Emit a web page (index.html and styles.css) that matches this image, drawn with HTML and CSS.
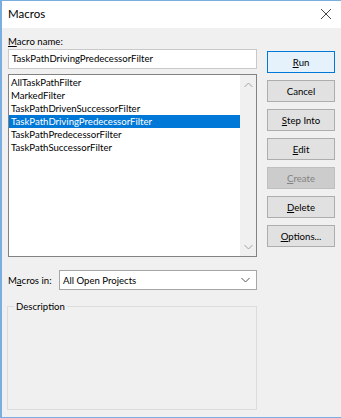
FILE: index.html
```html
<!DOCTYPE html>
<html>
<head>
<meta charset="utf-8">
<link rel="stylesheet" href="styles.css">
</head>
<body>
<div class="window">
  <div class="titlebar">
    <span class="title">Macros</span>
    <svg class="close" width="12" height="12" viewBox="0 0 12 12"><path d="M1 1 L11 11 M11 1 L1 11" stroke="#444" stroke-width="1" fill="none"/></svg>
  </div>
  <div class="content">
    <div class="left">
      <div class="label"><u>M</u>acro name:</div>
      <div class="input">TaskPathDrivingPredecessorFilter</div>
      <div class="list">
        <div class="items">
          <div class="item">AllTaskPathFilter</div>
          <div class="item">MarkedFilter</div>
          <div class="item">TaskPathDrivenSuccessorFilter</div>
          <div class="item selected">TaskPathDrivingPredecessorFilter</div>
          <div class="item">TaskPathPredecessorFilter</div>
          <div class="item">TaskPathSuccessorFilter</div>
        </div>
        <div class="scrollbar">
          <svg width="9" height="6" viewBox="0 0 9 6"><path d="M0.5 5 L4.5 1 L8.5 5" stroke="#a3a3a3" stroke-width="1" fill="none"/></svg>
          <svg width="9" height="6" viewBox="0 0 9 6"><path d="M0.5 1 L4.5 5 L8.5 1" stroke="#a3a3a3" stroke-width="1" fill="none"/></svg>
        </div>
      </div>
      <div class="combo-row">
        <span class="combo-label">M<u>a</u>cros in:</span>
        <div class="combo">
          <span>All Open Projects</span>
          <svg width="9" height="6" viewBox="0 0 9 6"><path d="M0.5 1 L4.5 5 L8.5 1" stroke="#555" stroke-width="1" fill="none"/></svg>
        </div>
      </div>
      <div class="group">
        <span class="group-label">Description</span>
      </div>
    </div>
    <div class="right">
      <div class="btn default"><u>R</u>un</div>
      <div class="btn">Cancel</div>
      <div class="btn"><u>S</u>tep Into</div>
      <div class="btn"><u>E</u>dit</div>
      <div class="btn disabled"><u>C</u>reate</div>
      <div class="btn"><u>D</u>elete</div>
      <div class="btn"><u>O</u>ptions...</div>
    </div>
  </div>
</div>
</body>
</html>
```
FILE: styles.css
```css
* { box-sizing: border-box; }
html, body { margin: 0; padding: 0; }
body {
  font-family: Lato, "Noto Sans", sans-serif;
  font-size: 9.6px;
  color: #000;
}
.window {
  width: 341px;
  height: 418px;
  background: #f0f0f0;
  border-left: 2px solid #7aaee0;
  border-top: 1px solid #7aaee0;
  border-bottom: 1px solid #7aaee0;
  display: flex;
  flex-direction: column;
}
.titlebar {
  height: 27px;
  background: #fff;
  display: flex;
  align-items: center;
  justify-content: space-between;
  padding: 0 9px 1px 6px;
  flex: none;
}
.title { font-size: 11.5px; line-height: 16px; }
.close { display: block; }
.content {
  display: flex;
  padding: 6px 0 0 6px;
  flex: 1;
}
.left {
  width: 249px;
  display: flex;
  flex-direction: column;
}
.label { line-height: 15px; height: 15px; }
u { text-decoration: underline; text-underline-offset: 1px; }
.input {
  height: 20px;
  background: #fff;
  border: 1px solid #c9c9c9;
  line-height: 18px;
  padding: 0 3px;
  white-space: nowrap;
}
.list {
  margin-top: 5px;
  height: 183px;
  background: #fff;
  border: 1px solid #828282;
  display: flex;
}
.items { flex: 1; padding-top: 1px; }
.item {
  height: 13px;
  line-height: 13px;
  padding-left: 2px;
  white-space: nowrap;
}
.item.selected { background: #0078d7; color: #fff; }
.scrollbar {
  width: 16px;
  background: #f0f0f0;
  display: flex;
  flex-direction: column;
  justify-content: space-between;
  align-items: center;
  padding: 7px 0 6px;
}
.scrollbar svg { display: block; }
.combo-row {
  margin-top: 13px;
  display: flex;
  align-items: center;
  height: 20px;
}
.combo-label { width: 51px; line-height: 15px; white-space: nowrap; }
.combo {
  flex: 1;
  height: 20px;
  background: #fff;
  border: 1px solid #a6a6a6;
  display: flex;
  align-items: center;
  justify-content: space-between;
  padding: 0 6px 0 3px;
  line-height: 15px;
}
.combo svg { display: block; }
.group {
  margin-top: 16px;
  margin-left: -1px;
  height: 104px;
  border: 1px solid #dcdcdc;
  position: relative;
}
.group-label {
  position: absolute;
  left: 6px;
  top: -8px;
  background: #f0f0f0;
  padding: 0 2px;
  line-height: 15px;
}
.right {
  margin-left: 10px;
  padding-top: 17px;
  display: flex;
  flex-direction: column;
  gap: 7px;
}
.btn {
  width: 68px;
  height: 22px;
  background: #e1e1e1;
  border: 1px solid #adadad;
  display: flex;
  align-items: center;
  justify-content: center;
  line-height: 15px;
}
.btn.default { background: #e5f1fb; border-color: #0078d7; }
.btn.disabled { background: #cccccc; border-color: #bfbfbf; color: #838383; }
```
